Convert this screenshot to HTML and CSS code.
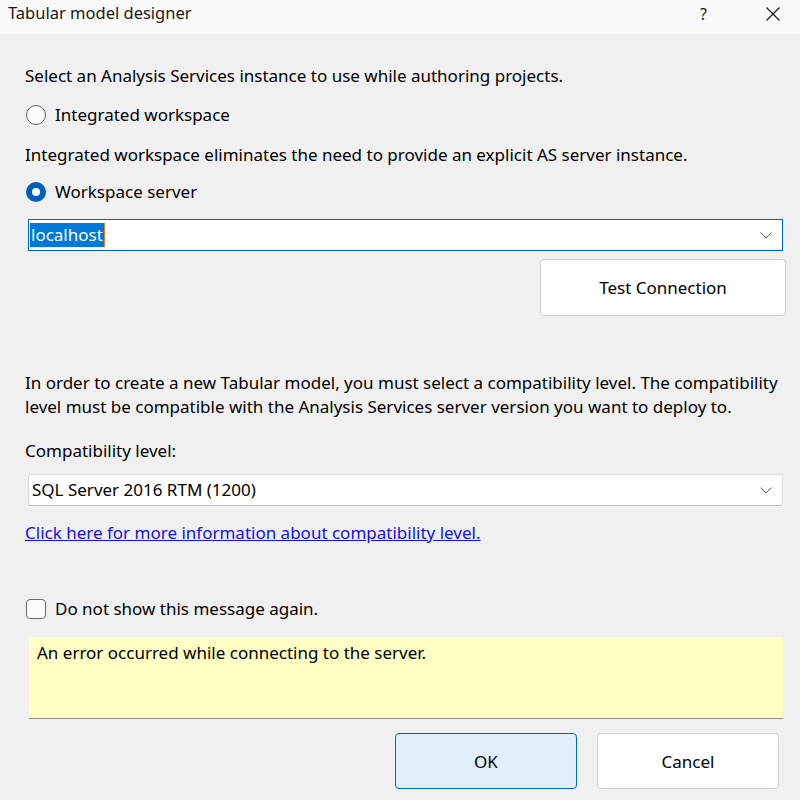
FILE: index.html
```html
<!DOCTYPE html>
<html>
<head>
    <meta charset="utf-8" />
    <meta name="viewport" content="width=device-width" />
    <title>Tabular model designer</title>
    <link rel="stylesheet" href="styles.css">
</head>
<body>
    <div class="titlebar">
        <span class="title">Tabular model designer</span>
        <div class="caption">
            <span class="help">?</span>
            <svg class="close" width="16" height="14" viewBox="0 0 16 14">
                <path d="M1.5 0.5 L14.5 13.5 M14.5 0.5 L1.5 13.5" stroke="#1a1a1a" stroke-width="1.2" fill="none" />
            </svg>
        </div>
    </div>

    <div class="content">
        <div class="line intro">Select an Analysis Services instance to use while authoring projects.</div>

        <label class="option first">
            <span class="radio"></span>
            <span>Integrated workspace</span>
        </label>

        <div class="line hint">Integrated workspace eliminates the need to provide an explicit AS server instance.</div>

        <label class="option second">
            <span class="radio checked"></span>
            <span>Workspace server</span>
        </label>

        <div class="combo focused">
            <span class="value"><span class="selected">localhost</span><span class="caret"></span></span>
            <svg class="chevron" width="12" height="7" viewBox="0 0 12 7">
                <path d="M0.5 0.5 L6 6 L11.5 0.5" stroke="#606060" stroke-width="1" fill="none" />
            </svg>
        </div>

        <div class="test-row">
            <button class="btn test">Test Connection</button>
        </div>

        <div class="para">In order to create a new Tabular model, you must select a compatibility level. The compatibility<br>level must be compatible with the Analysis Services server version you want to deploy to.</div>

        <div class="line compat-label">Compatibility level:</div>

        <div class="combo plain">
            <span class="value">SQL Server 2016 RTM (1200)</span>
            <svg class="chevron" width="12" height="7" viewBox="0 0 12 7">
                <path d="M0.5 0.5 L6 6 L11.5 0.5" stroke="#606060" stroke-width="1" fill="none" />
            </svg>
        </div>

        <a class="line link" href="#">Click here for more information about compatibility level.</a>

        <label class="option check-row">
            <span class="checkbox"></span>
            <span>Do not show this message again.</span>
        </label>

        <div class="message">An error occurred while connecting to the server.</div>

        <div class="actions">
            <button class="btn primary">OK</button>
            <button class="btn">Cancel</button>
        </div>
    </div>
</body>
</html>
```

FILE: styles.css
```css
body {
  margin: 0;
  background: #f0f0f0;
  font-family: "Noto Sans", "Open Sans", sans-serif;
  font-size: 17px;
  color: #000000;
  width: 800px;
  height: 800px;
  overflow: hidden;
}

.titlebar {
  height: 34px;
  background: #f9f9f9;
  display: flex;
  align-items: center;
  justify-content: space-between;
  padding: 0 19px 0 8px;
  box-sizing: border-box;
}

.title {
  font-size: 16.5px;
  line-height: 26px;
  margin-top: -8px;
  color: #1a1a1a;
}

.caption {
  display: flex;
  align-items: center;
  gap: 58px;
  margin-top: -6px;
}

.help {
  font-size: 16px;
  line-height: 20px;
  color: #1a1a1a;
}

.content {
  display: flex;
  flex-direction: column;
  padding: 0 14px 0 25px;
}

.line {
  line-height: 24px;
  height: 24px;
  white-space: nowrap;
}

.intro {
  margin-top: 30px;
}

.option {
  display: flex;
  align-items: center;
  gap: 9px;
  height: 24px;
  line-height: 24px;
}

.first {
  margin-top: 15px;
}

.hint {
  margin-top: 16px;
}

.second {
  margin-top: 13px;
}

.radio {
  width: 18px;
  height: 18px;
  border: 1px solid #5f5f5f;
  border-radius: 50%;
  margin-left: 1px;
  box-sizing: content-box;
  background: #fbfbfb;
}

.radio.checked {
  width: 8px;
  height: 8px;
  border: 6px solid #005fb8;
  background: #ffffff;
}

.combo {
  display: flex;
  align-items: center;
  justify-content: space-between;
  height: 32px;
  margin: 0 3px;
  background: #ffffff;
  box-sizing: border-box;
  padding: 0 10px 0 1px;
}

.focused {
  margin-top: 15px;
  border: 1px solid #0067c0;
}

.plain {
  margin-top: 11px;
  border: 1px solid #dcdcdc;
  border-bottom-color: #c4c4c4;
  border-radius: 3px;
  padding-left: 3px;
}

.value {
  display: flex;
  align-items: center;
  line-height: 24px;
}

.selected {
  background: #0078d7;
  color: #ffffff;
  padding: 0 1px;
}

.caret {
  width: 1px;
  height: 24px;
  background: #e08020;
}

.test-row {
  display: flex;
  justify-content: flex-end;
  margin-top: 8px;
}

.btn {
  font-family: inherit;
  font-size: 17px;
  color: #000000;
  height: 56px;
  width: 182px;
  background: #fdfdfd;
  border: 1px solid #d0d0d0;
  border-radius: 4px;
}

.test {
  width: 246px;
  height: 57px;
}

.para {
  margin-top: 55px;
  line-height: 24px;
  white-space: nowrap;
}

.compat-label {
  margin-top: 20px;
}

.link {
  margin-top: 15px;
  color: #1010f0;
  text-decoration: underline;
  align-self: flex-start;
}

.check-row {
  margin-top: 52px;
}

.checkbox {
  width: 18px;
  height: 18px;
  border: 1px solid #6a6a6a;
  border-radius: 4px;
  margin-left: 1px;
  background: #fbfbfb;
}

.message {
  margin: 16px 3px 0 4px;
  height: 82px;
  box-sizing: border-box;
  background: #ffffc4;
  border-bottom: 1px solid #8a8a8a;
  padding: 4px 8px;
  line-height: 24px;
}

.actions {
  display: flex;
  justify-content: flex-end;
  gap: 20px;
  margin-top: 14px;
  padding-right: 7px;
}

.primary {
  background: #e0eef9;
  border-color: #0067c0;
}
```
